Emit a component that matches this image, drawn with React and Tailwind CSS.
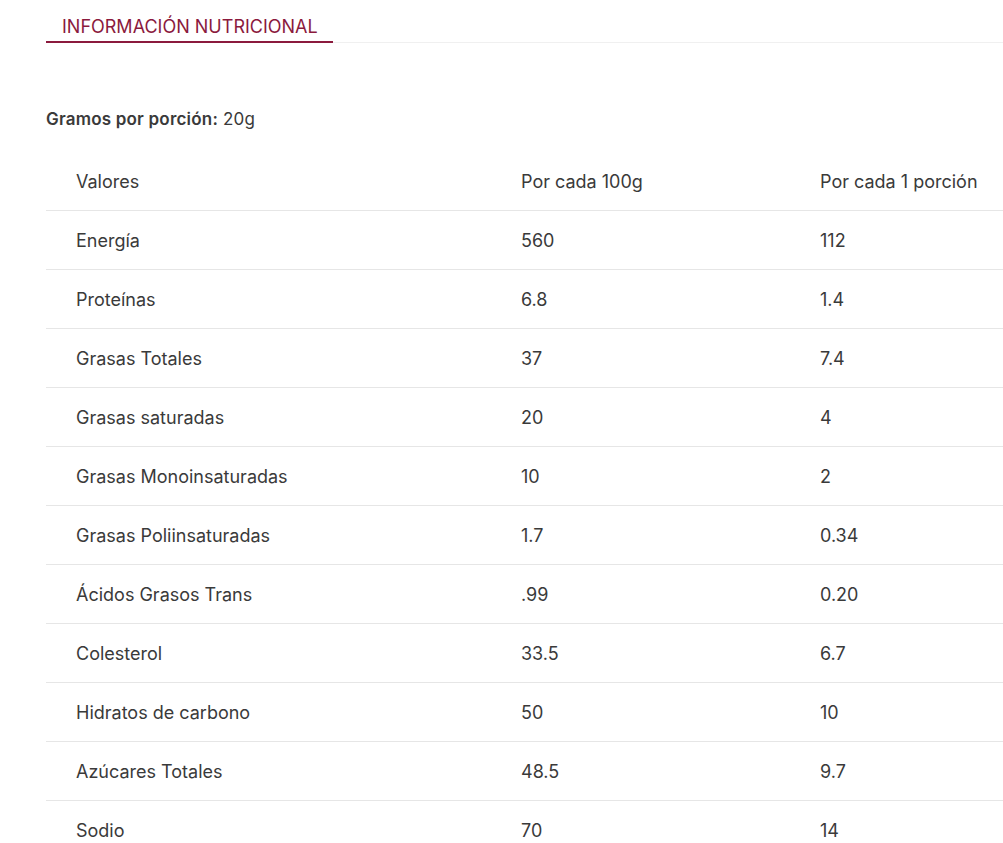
import React from "react";

const rows = [
  ["Energía", "560", "112"],
  ["Proteínas", "6.8", "1.4"],
  ["Grasas Totales", "37", "7.4"],
  ["Grasas saturadas", "20", "4"],
  ["Grasas Monoinsaturadas", "10", "2"],
  ["Grasas Poliinsaturadas", "1.7", "0.34"],
  ["Ácidos Grasos Trans", ".99", "0.20"],
  ["Colesterol", "33.5", "6.7"],
  ["Hidratos de carbono", "50", "10"],
  ["Azúcares Totales", "48.5", "9.7"],
  ["Sodio", "70", "14"],
];

export default function App() {
  return (
    <div className="w-[1003px] h-[843px] overflow-hidden bg-white pl-[46px] text-[#3a3a3a]" style={{ fontFamily: "Inter, 'Noto Sans', sans-serif" }}>
      <div className="flex border-b border-[#f0f0f0] mt-0">
        <div className="w-[287px] h-[43px] border-b-2 border-[#8b1a3d] pl-4 pt-[15px] text-[18px] leading-[24px] text-[#8b1a3d] -mb-px">
          INFORMACIÓN NUTRICIONAL
        </div>
      </div>
      <div className="mt-[64px] text-[17px] leading-[24px] tracking-[0.2px]">
        <span className="font-semibold">Gramos por porción:</span> 20g
      </div>
      <div className="mt-[21px]">
        <div className="grid grid-cols-[445px_299px_1fr] h-[59px] items-center border-b border-[#e6e6e6] text-[18px]">
          <div className="pl-[30px]">Valores</div>
          <div className="pl-[30px]">Por cada 100g</div>
          <div className="pl-[30px] whitespace-nowrap">Por cada 1 porción</div>
        </div>
        {rows.map((r, i) => (
          <div key={i} className="grid grid-cols-[445px_299px_1fr] h-[59px] items-center border-b border-[#e6e6e6] text-[18px]">
            <div className="pl-[30px]">{r[0]}</div>
            <div className="pl-[30px]">{r[1]}</div>
            <div className="pl-[30px]">{r[2]}</div>
          </div>
        ))}
      </div>
    </div>
  );
}
